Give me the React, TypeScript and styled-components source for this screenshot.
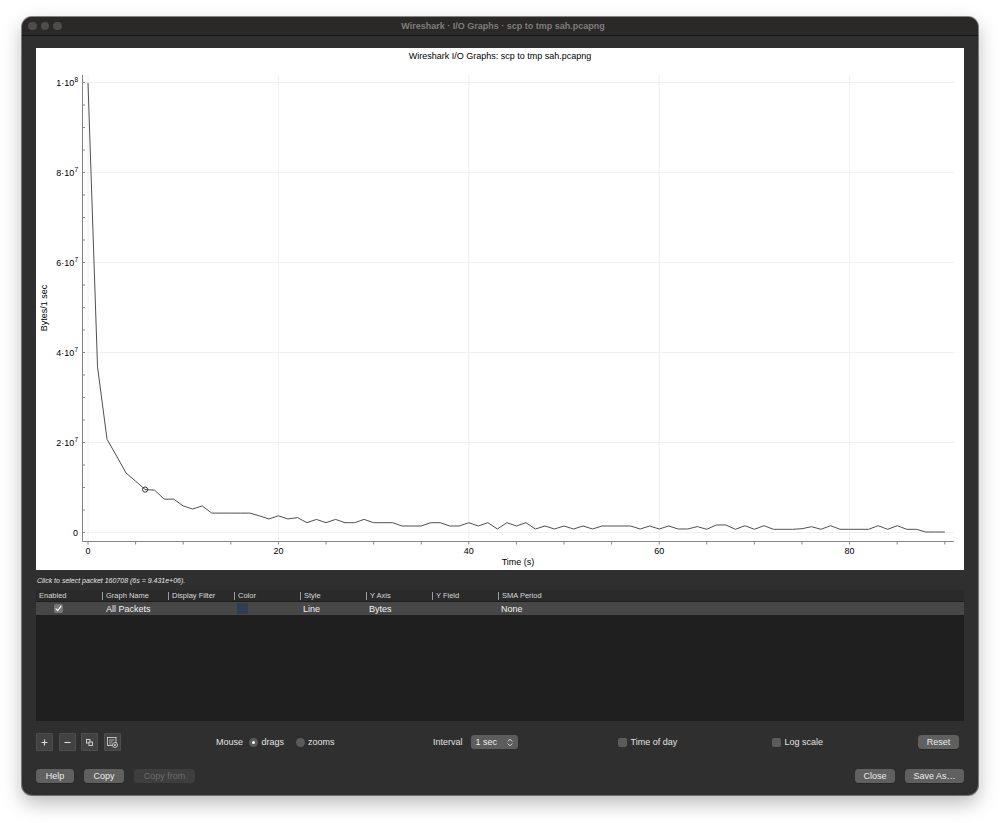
import React from "react";
import styled, { createGlobalStyle } from "styled-components";

const GlobalStyle = createGlobalStyle`
  html, body { margin: 0; padding: 0; background: #ffffff; }
  body { font-family: "Liberation Sans", Arial, Helvetica, sans-serif; }
  * { box-sizing: border-box; }
`;

const Page = styled.div`
  width: 1000px;
  height: 823px;
  padding: 17px 22px 0 22px;
`;

const Window = styled.div`
  width: 956px;
  height: 778px;
  background: #2f2f2f;
  border-radius: 10px;
  overflow: hidden;
  display: flex;
  flex-direction: column;
  box-shadow: 0 0 0 1px rgba(0, 0, 0, 0.45), 0 8px 20px rgba(0, 0, 0, 0.28);
`;

const TitleBar = styled.div`
  height: 19px;
  flex: none;
  background: #2b2828;
  border-bottom: 1px solid #161616;
  display: grid;
  grid-template-columns: 1fr auto 1fr;
  align-items: center;
  padding-left: 6px;
`;

const Lights = styled.div`
  display: flex;
  gap: 4px;
`;

const Light = styled.span`
  width: 8.5px;
  height: 8.5px;
  border-radius: 50%;
  background: #4d4b4b;
`;

const WindowTitle = styled.div`
  font-size: 9px;
  font-weight: bold;
  color: #7f7d7d;
  white-space: nowrap;
`;

const Body = styled.div`
  flex: 1;
  display: flex;
  flex-direction: column;
  padding: 12px 14px 12px 14px;
`;

const ChartPanel = styled.div`
  height: 522px;
  flex: none;
  background: #ffffff;
`;

const StatusLine = styled.div`
  height: 20px;
  flex: none;
  display: flex;
  align-items: center;
  font-size: 7px;
  font-style: italic;
  color: #e6e6e6;
  padding-left: 1px;
`;

const Table = styled.div`
  height: 131px;
  flex: none;
  background: #1f1f1f;
  display: flex;
  flex-direction: column;
`;

const columns = "repeat(7, 66px) 1fr 2px";

const HeaderRow = styled.div`
  display: grid;
  grid-template-columns: ${columns};
  height: 12px;
  background: #2a2a2a;
  border-bottom: 1px solid #1c1c1c;
  font-size: 7.5px;
  color: #d8d8d8;
`;

const HeaderCell = styled.div<{ $sep?: boolean }>`
  display: flex;
  align-items: center;
  padding-left: ${(p) => (p.$sep ? "0" : "3px")};
  white-space: nowrap;
  &::before {
    content: "";
    display: ${(p) => (p.$sep ? "block" : "none")};
    width: 1px;
    height: 8px;
    background: #9a9a9a;
    margin-right: 3px;
  }
`;

const DataRow = styled.div`
  display: grid;
  grid-template-columns: ${columns};
  height: 13px;
  background: #474747;
  font-size: 9px;
  color: #f2f2f2;
`;

const DataCell = styled.div<{ $pad?: number }>`
  display: flex;
  align-items: center;
  padding-left: ${(p) => p.$pad ?? 4}px;
  white-space: nowrap;
`;

const RowCheck = styled.span`
  width: 9px;
  height: 9px;
  border-radius: 2px;
  background: #777777;
  display: flex;
  align-items: center;
  justify-content: center;
`;

const Swatch = styled.span`
  width: 11px;
  height: 11px;
  background: #2f3e52;
`;

const ControlsRow = styled.div`
  margin-top: 12px;
  height: 18px;
  flex: none;
  display: grid;
  grid-template-columns: 180px 217px 185px 154px 146px 41px;
  align-items: center;
  font-size: 9px;
  color: #e2e2e2;
`;

const Group = styled.div<{ $gap: number }>`
  display: flex;
  align-items: center;
  gap: ${(p) => p.$gap}px;
  white-space: nowrap;
`;

const IconButton = styled.button`
  width: 17px;
  height: 18px;
  padding: 0;
  margin: 0;
  background: #424242;
  border: 1px solid #4e4e4e;
  border-radius: 1px;
  display: flex;
  align-items: center;
  justify-content: center;
  color: #dddddd;
`;

const Radio = styled.span<{ $checked?: boolean }>`
  width: 9px;
  height: 9px;
  border-radius: 50%;
  background: #5b5b5b;
  display: flex;
  align-items: center;
  justify-content: center;
  &::after {
    content: "";
    display: ${(p) => (p.$checked ? "block" : "none")};
    width: 3px;
    height: 3px;
    border-radius: 50%;
    background: #ffffff;
  }
`;

const CheckBox = styled.span`
  width: 9px;
  height: 9px;
  border-radius: 2px;
  background: #5b5b5b;
`;

const Select = styled.div`
  width: 47px;
  height: 14px;
  border-radius: 3px;
  background: #5d5d5d;
  display: flex;
  align-items: center;
  justify-content: space-between;
  padding: 0 5px 0 5px;
  color: #ececec;
`;

const PushButton = styled.button<{ $w: number; $disabled?: boolean }>`
  width: ${(p) => p.$w}px;
  height: 14px;
  padding: 0;
  margin: 0;
  border: none;
  border-radius: 3.5px;
  background: ${(p) => (p.$disabled ? "#3e3e3e" : "#606060")};
  color: ${(p) => (p.$disabled ? "#6c6c6c" : "#ececec")};
  font-family: "Liberation Sans", Arial, sans-serif;
  font-size: 9px;
  box-shadow: ${(p) => (p.$disabled ? "none" : "0 0.5px 0.5px rgba(0,0,0,0.35)")};
`;

const ButtonRow = styled.div`
  margin-top: 18px;
  height: 14px;
  flex: none;
  display: flex;
  align-items: center;
  gap: 10px;
`;

const Spacer = styled.div`
  flex: 1;
`;

/* ---------- chart ---------- */

const DATA: number[] = [
  99.8, 36.7, 20.6, 16.9, 13.1, 11.3, 9.431, 9.3, 7.3, 7.3,
  5.8, 5.1, 5.8, 4.2, 4.2, 4.2, 4.2, 4.2, 3.6, 2.9,
  3.6, 2.9, 3.2, 2.07, 2.8, 2.07, 2.8, 2.07, 2.07, 2.8,
  2.07, 2.07, 2.07, 1.33, 1.33, 1.33, 2.07, 2.07, 1.33, 1.33,
  2.07, 1.33, 2.07, 0.67, 2.07, 1.33, 2.07, 0.67, 1.33, 0.67,
  1.33, 0.67, 1.33, 0.67, 1.33, 1.33, 1.33, 1.33, 0.67, 1.33,
  0.67, 1.33, 0.67, 0.67, 1.2, 0.6, 1.56, 1.56, 0.6, 1.4,
  0.6, 1.4, 0.6, 0.6, 0.6, 0.73, 1.18, 0.6, 1.4, 0.6,
  0.6, 0.6, 0.6, 1.4, 0.6, 1.4, 0.6, 0.6, 0, 0,
  0,
];

const X0 = 52;
const PX_S = 9.52;
const Y0 = 484;
const PX_M = 4.5;
const L = 46.5;
const R = 918;
const T = 27;
const B = 493.5;
const sx = (t: number) => X0 + t * PX_S;
const sy = (v: number) => Y0 - v * PX_M;

const yLabels: { v: number; base: string; exp?: string }[] = [
  { v: 0, base: "0" },
  { v: 20, base: "2·10", exp: "7" },
  { v: 40, base: "4·10", exp: "7" },
  { v: 60, base: "6·10", exp: "7" },
  { v: 80, base: "8·10", exp: "7" },
  { v: 100, base: "1·10", exp: "8" },
];

const Chart: React.FC = () => {
  const pts = DATA.map((v, i) => `${sx(i).toFixed(2)},${sy(v).toFixed(2)}`).join(" ");
  const yTicks: number[] = [];
  for (let v = 0; v <= 100; v += 5) yTicks.push(v);
  const xTicks: number[] = [];
  for (let t = 0; t <= 90; t += 5) xTicks.push(t);
  const font = '"Liberation Sans", Arial, sans-serif';
  return (
    <svg width={928} height={522} viewBox="0 0 928 522" style={{ display: "block" }}>
      <text x={464} y={10.5} textAnchor="middle" fontSize={9} fontFamily={font} fill="#000">
        Wireshark I/O Graphs: scp to tmp sah.pcapng
      </text>
      {/* grid */}
      {[0, 20, 40, 60, 80, 100].map((v) => (
        <line key={"gy" + v} x1={L} x2={R} y1={sy(v) + 0.5} y2={sy(v) + 0.5} stroke="#f0f0f0" strokeWidth={1} />
      ))}
      {[0, 20, 40, 60, 80].map((t) => (
        <line key={"gx" + t} x1={sx(t)} x2={sx(t)} y1={T} y2={B} stroke="#f0f0f0" strokeWidth={1} />
      ))}
      {/* axes */}
      <line x1={L} x2={L} y1={T} y2={B} stroke="#858585" strokeWidth={1} />
      <line x1={L} x2={R} y1={B} y2={B} stroke="#858585" strokeWidth={1} />
      {yTicks.map((v) => (
        <line key={"ty" + v} x1={L} x2={L + 2.5} y1={sy(v) + 0.5} y2={sy(v) + 0.5} stroke="#858585" strokeWidth={1} />
      ))}
      {xTicks.map((t) => (
        <line key={"tx" + t} x1={sx(t)} x2={sx(t)} y1={B} y2={B + 3} stroke="#858585" strokeWidth={1} />
      ))}
      {/* labels */}
      {yLabels.map((l) => (
        <text key={"yl" + l.v} x={42} y={sy(l.v) + 3.5} textAnchor="end" fontSize={9} fontFamily={font} fill="#000">
          {l.base}
          {l.exp ? (
            <tspan fontSize={6.5} dy={-3.5}>
              {l.exp}
            </tspan>
          ) : null}
        </text>
      ))}
      {[0, 20, 40, 60, 80].map((t) => (
        <text key={"xl" + t} x={sx(t)} y={505.5} textAnchor="middle" fontSize={9} fontFamily={font} fill="#000">
          {t}
        </text>
      ))}
      <text x={482} y={516.5} textAnchor="middle" fontSize={9} fontFamily={font} fill="#000">
        Time (s)
      </text>
      <text
        x={0}
        y={0}
        transform="translate(11 260) rotate(-90)"
        textAnchor="middle"
        fontSize={9}
        fontFamily={font}
        fill="#000"
      >
        Bytes/1 sec
      </text>
      {/* data */}
      <polyline points={pts} fill="none" stroke="#505050" strokeWidth={1} strokeLinejoin="round" />
      <circle cx={sx(6)} cy={sy(9.431)} r={2.6} fill="none" stroke="#333" strokeWidth={1} />
    </svg>
  );
};

/* ---------- icons ---------- */

const PlusIcon = () => (
  <svg width="7" height="7" viewBox="0 0 7 7">
    <path d="M3.5 0.5v6M0.5 3.5h6" stroke="currentColor" strokeWidth="1.1" />
  </svg>
);

const MinusIcon = () => (
  <svg width="7" height="7" viewBox="0 0 7 7">
    <path d="M0.5 3.5h6" stroke="currentColor" strokeWidth="1.1" />
  </svg>
);

const CopyIcon = () => (
  <svg width="7" height="7" viewBox="0 0 7 7">
    <rect x="0.5" y="0.5" width="3.5" height="3.5" fill="none" stroke="currentColor" strokeWidth="0.9" />
    <rect x="3" y="3" width="3.5" height="3.5" fill="#424242" stroke="currentColor" strokeWidth="0.9" />
  </svg>
);

const ClearIcon = () => (
  <svg width="11" height="11" viewBox="0 0 11 11">
    <rect x="0.5" y="0.5" width="8.5" height="8" fill="none" stroke="currentColor" strokeWidth="0.8" />
    <path d="M2 3h5.5M2 5h3.5M2 7h2.5" stroke="currentColor" strokeWidth="0.7" />
    <circle cx="8" cy="8" r="2.5" fill="#424242" stroke="currentColor" strokeWidth="0.8" />
    <path d="M7 7l2 2M9 7l-2 2" stroke="currentColor" strokeWidth="0.7" />
  </svg>
);

const CheckMark = () => (
  <svg width="7" height="7" viewBox="0 0 7 7">
    <path d="M1 3.8L2.8 5.6L6 1.2" fill="none" stroke="#ffffff" strokeWidth="1.2" strokeLinecap="round" strokeLinejoin="round" />
  </svg>
);

const Chevrons = () => (
  <svg width="6" height="9" viewBox="0 0 6 9">
    <path d="M1 3.2L3 1.2L5 3.2M1 5.8L3 7.8L5 5.8" fill="none" stroke="#e8e8e8" strokeWidth="0.9" strokeLinecap="round" strokeLinejoin="round" />
  </svg>
);

const headers = ["Enabled", "Graph Name", "Display Filter", "Color", "Style", "Y Axis", "Y Field", "SMA Period"];

export default function App() {
  return (
    <>
      <GlobalStyle />
      <Page>
        <Window>
          <TitleBar>
            <Lights>
              <Light />
              <Light />
              <Light />
            </Lights>
            <WindowTitle>Wireshark · I/O Graphs · scp to tmp sah.pcapng</WindowTitle>
            <div />
          </TitleBar>
          <Body>
            <ChartPanel>
              <Chart />
            </ChartPanel>
            <StatusLine>Click to select packet 160708 (6s = 9.431e+06).</StatusLine>
            <Table>
              <HeaderRow>
                {headers.map((h, i) => (
                  <HeaderCell key={h} $sep={i > 0}>
                    {h}
                  </HeaderCell>
                ))}
                <HeaderCell $sep />
              </HeaderRow>
              <DataRow>
                <DataCell $pad={18}>
                  <RowCheck>
                    <CheckMark />
                  </RowCheck>
                </DataCell>
                <DataCell>All Packets</DataCell>
                <DataCell />
                <DataCell $pad={3}>
                  <Swatch />
                </DataCell>
                <DataCell $pad={3}>Line</DataCell>
                <DataCell $pad={3}>Bytes</DataCell>
                <DataCell />
                <DataCell $pad={3}>None</DataCell>
                <DataCell />
              </DataRow>
            </Table>
            <ControlsRow>
              <Group $gap={5.5}>
                <IconButton>
                  <PlusIcon />
                </IconButton>
                <IconButton>
                  <MinusIcon />
                </IconButton>
                <IconButton>
                  <CopyIcon />
                </IconButton>
                <IconButton>
                  <ClearIcon />
                </IconButton>
              </Group>
              <Group $gap={6}>
                <span>Mouse</span>
                <Group $gap={11.5}>
                  <Group $gap={3.5}>
                    <Radio $checked />
                    <span>drags</span>
                  </Group>
                  <Group $gap={3.5}>
                    <Radio />
                    <span>zooms</span>
                  </Group>
                </Group>
              </Group>
              <Group $gap={8}>
                <span>Interval</span>
                <Select>
                  <span>1 sec</span>
                  <Chevrons />
                </Select>
              </Group>
              <Group $gap={3.5}>
                <CheckBox />
                <span>Time of day</span>
              </Group>
              <Group $gap={3.5}>
                <CheckBox />
                <span>Log scale</span>
              </Group>
              <PushButton $w={41}>Reset</PushButton>
            </ControlsRow>
            <ButtonRow>
              <PushButton $w={38}>Help</PushButton>
              <PushButton $w={40}>Copy</PushButton>
              <PushButton $w={61} $disabled>
                Copy from
              </PushButton>
              <Spacer />
              <PushButton $w={40}>Close</PushButton>
              <PushButton $w={59}>Save As…</PushButton>
            </ButtonRow>
          </Body>
        </Window>
      </Page>
    </>
  );
}
